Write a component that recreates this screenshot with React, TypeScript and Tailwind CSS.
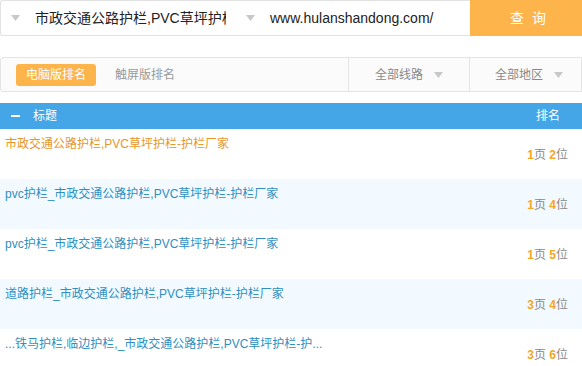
import React from "react";

const font = { fontFamily: '"Liberation Sans", Arial, "Noto Sans CJK SC", sans-serif' };

function Caret({ className = "" }: { className?: string }) {
  return (
    <svg width="9" height="6" viewBox="0 0 9 6" className={className}>
      <path d="M0 0 L9 0 L4.5 6 Z" fill="#c8c8c8" />
    </svg>
  );
}

const rows = [
  { title: "市政交通公路护栏,PVC草坪护栏-护栏厂家", page: "1", pos: "2", first: true },
  { title: "pvc护栏_市政交通公路护栏,PVC草坪护栏-护栏厂家", page: "1", pos: "4" },
  { title: "pvc护栏_市政交通公路护栏,PVC草坪护栏-护栏厂家", page: "1", pos: "5" },
  { title: "道路护栏_市政交通公路护栏,PVC草坪护栏-护栏厂家", page: "3", pos: "4" },
  { title: "...铁马护栏,临边护栏,_市政交通公路护栏,PVC草坪护栏-护...", page: "3", pos: "6" },
];

export default function App() {
  return (
    <div className="w-[582px] h-[366px] overflow-hidden bg-white" style={font}>
      {/* search bar */}
      <div className="flex h-[36px]">
        <div className="flex flex-1 border border-r-0 border-[#e2e2e2] rounded-l-[3px]">
          <div className="flex items-center w-[236px]">
            <Caret className="ml-[10px] shrink-0" />
            <div className="ml-[15px] w-[191px] overflow-hidden">
              <span className="text-[14px] text-[#222] whitespace-nowrap">
                市政交通公路护栏,PVC草坪护栏-护栏厂家
              </span>
            </div>
          </div>
          <div className="flex items-center">
            <Caret className="ml-[9px] shrink-0" />
            <span className="ml-[15px] text-[14px] text-[#222] whitespace-nowrap">www.hulanshandong.com/</span>
          </div>
        </div>
        <div className="w-[112px] bg-[#fdb44b] flex items-center justify-center text-white text-[14px] tracking-[8px] pl-[12px]">
          查询
        </div>
      </div>

      {/* filter bar */}
      <div className="mt-[21px] h-[35px] flex border border-[#e4e4e4] rounded-l-[3px] bg-[#fbfbfb]">
        <div className="flex-1 flex items-center">
          <div className="ml-[15px] w-[80px] h-[22px] rounded-[3px] bg-[#fdb44b] text-white text-[12px] flex items-center justify-center">
            电脑版排名
          </div>
          <span className="ml-[19px] text-[12px] text-[#999]">触屏版排名</span>
        </div>
        <div className="w-[121px] border-l border-[#e4e4e4] flex items-center">
          <span className="ml-[26px] text-[12px] text-[#888]">全部线路</span>
          <Caret className="ml-[11px]" />
        </div>
        <div className="w-[112px] border-l border-[#e4e4e4] flex items-center">
          <span className="ml-[25px] text-[12px] text-[#888]">全部地区</span>
          <Caret className="ml-[11px]" />
        </div>
      </div>

      {/* table header */}
      <div className="mt-[11px] h-[26px] bg-[#44a6e6] flex items-center text-white text-[12px]">
        <div className="ml-[11px] w-[9px] h-[2px] bg-white" />
        <span className="ml-[13px] flex-1">标题</span>
        <span className="mr-[22px]">排名</span>
      </div>

      {/* rows */}
      {rows.map((r, i) => (
        <div
          key={i}
          className={`h-[50px] flex justify-between ${i % 2 === 1 ? "bg-[#f3faff]" : "bg-white"}`}
        >
          <div
            className={`pl-[5px] pt-[7px] text-[12px] leading-[16px] whitespace-nowrap ${
              r.first ? "text-[#e8962a]" : "text-[#2f8fc0]"
            }`}
          >
            {r.title}
          </div>
          <div className="pr-[14px] pt-[18px] text-[12px] leading-[16px] text-[#888] whitespace-nowrap">
            <span className="text-[#f5a623] font-bold">{r.page}</span>页{" "}
            <span className="text-[#f5a623] font-bold">{r.pos}</span>位
          </div>
        </div>
      ))}
    </div>
  );
}
